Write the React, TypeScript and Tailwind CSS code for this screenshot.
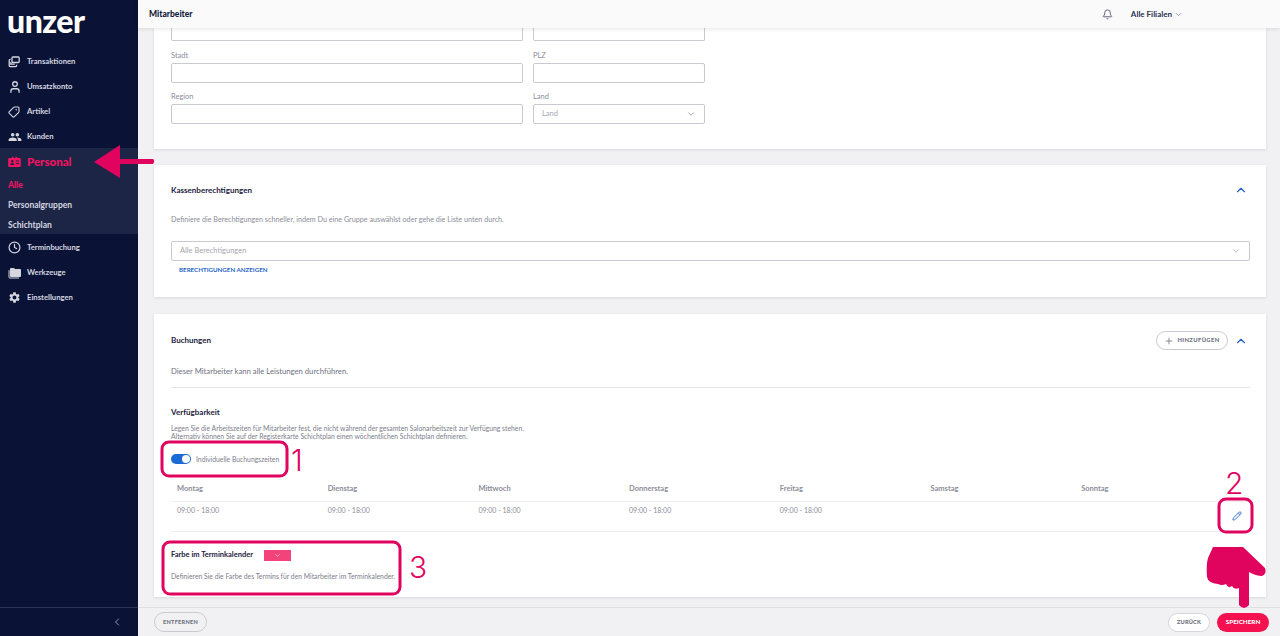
import React from 'react';
import { Bell, ChevronDown, ChevronLeft, ChevronUp, Clock, Pencil, Plus, Tag, User } from 'lucide-react';
import { MdPeople, MdSettings } from 'react-icons/md';

const font = 'font-["Lato","Liberation_Sans",sans-serif]';

const TransactionsIcon = () => (
    <svg width="12" height="12" viewBox="0 0 12 12" fill="none" stroke="currentColor" strokeWidth="1.3">
        <rect x="4" y="1" width="7.2" height="5.5" rx="1" />
        <path d="M2.6 3.4h-.4a1 1 0 0 0-1 1v5.2a1 1 0 0 0 1 1h5.4a1 1 0 0 0 1-1v-.8" />
        <path d="M2.8 6v2.2h4" />
    </svg>
);

const FoldersIcon = () => (
    <svg width="13" height="12" viewBox="0 0 13 12" fill="currentColor">
        <path d="M3 1h3l1 1h5a1 1 0 0 1 1 1v6a1 1 0 0 1-1 1H3a1 1 0 0 1-1-1V2a1 1 0 0 1 1-1z" />
        <path d="M1 3.2v7a.8.8 0 0 0 .8.8h9.2" fill="none" stroke="currentColor" strokeWidth="1" />
    </svg>
);

const IdCardIcon = () => (
    <svg width="13" height="12" viewBox="0 0 13 12" fill="currentColor">
        <path d="M1.200 2h2.800V.8h1.500V2h2V.8h1.500V2h2.800a1 1 0 0 1 1 1v7a1 1 0 0 1-1 1H1.200a1 1 0 0 1-1-1V3a1 1 0 0 1 1-1z" />
        <circle cx="4.300" cy="5.300" r="1.200" fill="#1d2547" />
        <path d="M2.200 9c0-1.300 1-2 2.100-2s2.100.7 2.100 2z" fill="#1d2547" />
        <path d="M7.800 5h3.200M7.800 7.500h3.200" stroke="#1d2547" strokeWidth="1" />
    </svg>
);

const NavItem = ({ icon, label }: { icon: React.ReactNode; label: string }) => (
    <div className="h-[25px] pt-[2px] flex items-center pl-2 text-[#d5d7e0]">
        <span className="w-[19px] flex items-center">{icon}</span>
        <span className="text-[7.700px] font-bold">{label}</span>
    </div>
);

const Field = ({ label, wide, placeholder }: { label: string; wide?: boolean; placeholder?: string }) => (
    <div className={wide ? 'w-[352px]' : 'w-[172px]'}>
        <div className="h-[13px] pt-[1px] text-[7.500px] leading-[10px] text-[#8b8d99]">{label}</div>
        <div className="h-[20px] border border-[#c9cad1] rounded-[2px] flex items-center justify-between px-2 bg-white">
            {placeholder && <span className="text-[7.500px] text-[#a5a7b0]">{placeholder}</span>}
            {placeholder && <ChevronDown size={10} className="text-[#9a9ca6]" />}
        </div>
    </div>
);

const days = ['Montag', 'Dienstag', 'Mittwoch', 'Donnerstag', 'Freitag', 'Samstag', 'Sonntag'];
const times = ['09:00 - 18:00', '09:00 - 18:00', '09:00 - 18:00', '09:00 - 18:00', '09:00 - 18:00', '', ''];

const digit = 'absolute text-[30px] leading-[38px] font-["Inter",sans-serif] font-light text-[#e0045f]';

const Overlay = () => (
    <>
        <svg width="1280" height="636" viewBox="0 0 1280 636" className="absolute inset-0 pointer-events-none">
            <g fill="none" stroke="#e0045f" strokeWidth="3">
                <rect x="162" y="442" width="125" height="34" rx="7" />
                <rect x="1219" y="499" width="33" height="33" rx="7" />
                <rect x="163" y="542" width="237" height="52" rx="7" />
            </g>
            <g fill="#e0045f">
                <path d="M94 162 L120 145 L120 159 L153 159 Q155.500 161 153 164 L120 164 L120 178 Z" />
                <path d="M1213 547 L1243 547 L1265 568 Q1267 574 1262 576 Q1256 576 1249 572 L1249 605 Q1244 611 1239 605 L1239 588 Q1234 590 1232 586 Q1228 589 1226 584 Q1222 586 1218 584 Q1208 583 1207 577 Q1206 565 1208 558 Z" />
            </g>
        </svg>
        <span className={`${digit} left-[291px] top-[441px]`}>1</span>
        <span className={`${digit} left-[1225px] top-[464px]`}>2</span>
        <span className={`${digit} left-[409px] top-[548px]`}>3</span>
    </>
);

const App: React.FC = () => {
    return (
        <div className={`relative w-[1280px] h-[636px] overflow-hidden flex bg-[#f1f1f3] ${font}`}>
            {/* sidebar */}
            <aside className="w-[138px] shrink-0 bg-[#0a1236] flex flex-col">
                <div className="h-[48px] pl-[7px] pt-[3px] text-[32px] leading-[36px] font-black tracking-[-0.5px] text-white">unzer</div>
                <div>
                    <NavItem icon={<TransactionsIcon />} label="Transaktionen" />
                    <NavItem icon={<User size={14} strokeWidth={2.2} />} label="Umsatzkonto" />
                    <NavItem icon={<Tag size={12} strokeWidth={2.2} className="rotate-90" />} label="Artikel" />
                    <NavItem icon={<MdPeople size={14} />} label="Kunden" />
                </div>
                <div className="h-[86px] bg-[#1d2547]">
                    <div className="h-[27px] flex items-center pl-2 text-[#f0145f]">
                        <span className="w-[19px] flex items-center"><IdCardIcon /></span>
                        <span className="text-[11.500px] font-black">Personal</span>
                    </div>
                    <div className="pl-2 text-[8.500px] font-bold leading-[20px] text-[#d5d7e0]">
                        <div className="font-black text-[#f0145f]">Alle</div>
                        <div>Personalgruppen</div>
                        <div>Schichtplan</div>
                    </div>
                </div>
                <NavItem icon={<Clock size={13} strokeWidth={2.2} />} label="Terminbuchung" />
                <NavItem icon={<FoldersIcon />} label="Werkzeuge" />
                <NavItem icon={<MdSettings size={13} />} label="Einstellungen" />
                <div className="mt-auto h-[29px] border-t border-[#2b3357] flex items-center justify-end pr-[15px] text-[#9a9eb2]">
                    <ChevronLeft size={12} />
                </div>
            </aside>

            {/* main column */}
            <div className="flex-1 flex flex-col min-w-0">
                <header className="h-[28px] shrink-0 bg-[#fafafa] shadow-[0_1px_4px_rgba(0,0,0,0.1)] z-10 flex items-center pl-[11px] pr-[97px]">
                    <span className="text-[8.500px] font-black text-[#141a3c]">Mitarbeiter</span>
                    <Bell size={11} className="ml-auto text-[#55586a]" />
                    <span className="ml-[18px] text-[8px] font-bold text-[#2a3050]">Alle Filialen</span>
                    <ChevronDown size={9} className="ml-[2px] text-[#7c7f90]" />
                </header>

                <main className="flex-1 overflow-hidden pl-[16px] pr-[14px] min-h-0">
                    {/* first card, scrolled partly out of view */}
                    <section className="h-[121px] bg-white shadow-[0_1px_3px_rgba(0,0,0,0.1)] px-[17px]">
                        <div className="flex gap-[10px]">
                            <div className="w-[352px] h-[13px] border border-t-0 border-[#c9cad1] rounded-b-[2px]" />
                            <div className="w-[172px] h-[13px] border border-t-0 border-[#c9cad1] rounded-b-[2px]" />
                        </div>
                        <div className="flex gap-[10px] mt-[9px]">
                            <Field label="Stadt" wide />
                            <Field label="PLZ" />
                        </div>
                        <div className="flex gap-[10px] mt-[8px]">
                            <Field label="Region" wide />
                            <Field label="Land" placeholder="Land" />
                        </div>
                    </section>

                    {/* Kassenberechtigungen */}
                    <section className="h-[132px] mt-[16px] bg-white shadow-[0_1px_3px_rgba(0,0,0,0.1)] pl-[17px] pr-[16px] pt-[19px]">
                        <div className="flex items-center justify-between h-[12px]">
                            <span className="text-[8px] font-bold text-[#1c2140]">Kassenberechtigungen</span>
                            <ChevronUp size={14} className="text-[#2563c9] mr-[2px]" />
                        </div>
                        <p className="mt-[18px] text-[7.200px] leading-[12px] text-[#8b8d99]">Definiere die Berechtigungen schneller, indem Du eine Gruppe auswählst oder gehe die Liste unten durch.</p>
                        <div className="mt-[15px] h-[20px] border border-[#c9cad1] rounded-[2px] flex items-center justify-between px-2">
                            <span className="text-[7.500px] text-[#a5a7b0]">Alle Berechtigungen</span>
                            <ChevronDown size={10} className="text-[#b0b2bb]" />
                        </div>
                        <div className="mt-[4px] pl-2 text-[6.200px] leading-[10px] font-bold text-[#2563c9]">BERECHTIGUNGEN ANZEIGEN</div>
                    </section>

                    {/* Buchungen */}
                    <section className="h-[283px] mt-[17px] bg-white shadow-[0_1px_3px_rgba(0,0,0,0.1)] pl-[17px] pr-[16px] pt-[17px]">
                        <div className="flex items-center h-[19px]">
                            <span className="mb-[2px] text-[8px] font-bold text-[#1c2140]">Buchungen</span>
                            <button className="ml-auto w-[72px] h-[19px] border border-[#c9cad1] rounded-full flex items-center justify-center gap-[3px] text-[5.800px] font-black tracking-[0.4px] text-[#6b6e7c]">
                                <Plus size={10} className="text-[#777a88]" />
                                HINZUFÜGEN
                            </button>
                            <ChevronUp size={14} className="text-[#2563c9] ml-[6px] mr-[2px]" />
                        </div>
                        <p className="mt-[15px] pb-[10px] border-b border-[#e6e6ea] text-[7.700px] leading-[12px] text-[#6f7180]">Dieser Mitarbeiter kann alle Leistungen durchführen.</p>

                        <h3 className="mt-[19px] text-[8px] leading-[10px] font-bold text-[#1c2140]">Verfügbarkeit</h3>
                        <p className="mt-[7px] text-[6.800px] leading-[8px] text-[#7c7e8c]">
                            Legen Sie die Arbeitszeiten für Mitarbeiter fest, die nicht während der gesamten Salonarbeitszeit zur Verfügung stehen.<br />
                            Alternativ können Sie auf der Registerkarte Schichtplan einen wöchentlichen Schichtplan definieren.
                        </p>
                        <div className="mt-[13px] h-[12px] flex items-center gap-[5px]">
                            <div className="w-[20px] h-[10px] rounded-full bg-[#1a6bd6] flex items-center justify-end pr-[1px]">
                                <span className="w-[8px] h-[8px] rounded-full bg-white" />
                            </div>
                            <span className="text-[6.800px] text-[#7c7e8c]">Individuelle Buchungszeiten</span>
                        </div>

                        <div className="mt-[19px] grid grid-cols-[repeat(7,150.7px)_1fr] h-[18px] items-start border-b border-[#efeff2] pl-[6px]">
                            {days.map((d) => (
                                <span key={d} className="text-[7.500px] leading-[10px] font-bold text-[#8b8d99]">{d}</span>
                            ))}
                        </div>
                        <div className="grid grid-cols-[repeat(7,150.7px)_1fr] h-[30px] pt-[3px] items-start border-b border-[#efeff2] pl-[6px]">
                            {times.map((t, i) => (
                                <span key={i} className="text-[7px] leading-[10px] text-[#8b8d99]">{t}</span>
                            ))}
                            <Pencil size={10} className="text-[#2563c9] justify-self-end mr-[8px] mt-[6px]" />
                        </div>

                        <div className="mt-[15px] flex items-center h-[16px]">
                            <span className="w-[93px] text-[7.500px] font-bold text-[#1c2140]">Farbe im Terminkalender</span>
                            <div className="w-[27px] h-[11px] bg-[#f2447a] flex items-center justify-center text-white">
                                <ChevronDown size={7} />
                            </div>
                        </div>
                        <p className="mt-[8px] text-[6.800px] leading-[10px] text-[#7c7e8c]">Definieren Sie die Farbe des Termins für den Mitarbeiter im Terminkalender.</p>
                    </section>
                </main>

                <footer className="h-[29px] shrink-0 bg-[#f1f1f3] border-t border-[#dedee3] flex items-center pl-[16px] pr-[11px]">
                    <button className="w-[53px] h-[20px] border border-[#c9cad1] rounded-full text-[5.500px] font-black tracking-[0.3px] text-[#6b6e7c]">ENTFERNEN</button>
                    <button className="ml-auto w-[42px] h-[19px] bg-white border border-[#d6d6dc] rounded-full text-[5.600px] font-black tracking-[0.2px] text-[#6b6e7c]">ZURÜCK</button>
                    <button className="ml-[7px] w-[52px] h-[19px] bg-[#f5104f] rounded-full text-[6.300px] font-black text-white">SPEICHERN</button>
                </footer>
            </div>

            <Overlay />
        </div>
    );
};

export default App;
